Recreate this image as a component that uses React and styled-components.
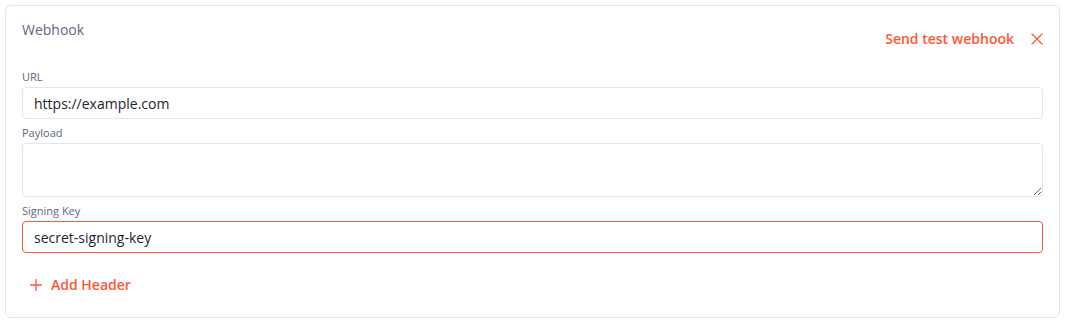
import React from 'react';
import styled, { createGlobalStyle } from 'styled-components';

const GlobalStyle = createGlobalStyle`
  body {
    margin: 0;
    background: #ffffff;
    font-family: "Open Sans", "Noto Sans", sans-serif;
  }
`;

const Page = styled.div`
  padding: 5px 7px 7px 5px;
`;

const Card = styled.section`
  border: 1px solid #e3e5ea;
  border-radius: 6px;
  padding: 16px 16px 24px 16px;
  display: flex;
  flex-direction: column;
`;

const Header = styled.div`
  display: flex;
  justify-content: space-between;
  align-items: flex-start;
  height: 48px;
`;

const Title = styled.h2`
  margin: 0;
  font-size: 14px;
  line-height: 16px;
  font-weight: 400;
  color: #5d6784;
`;

const Actions = styled.div`
  display: flex;
  align-items: center;
  gap: 17px;
  margin-top: 8px;
  margin-right: 0;
`;

const TextButton = styled.button`
  display: flex;
  align-items: center;
  gap: ${(p) => p.$gap || 0}px;
  padding: 0;
  border: none;
  background: none;
  font-family: inherit;
  font-size: 14px;
  line-height: 17px;
  font-weight: 600;
  color: #ff5733;
  cursor: pointer;
`;

const Field = styled.label`
  display: flex;
  flex-direction: column;
  gap: 3px;
  margin-bottom: 7px;
`;

const Label = styled.span`
  font-size: 11px;
  line-height: 14px;
  color: #5d6784;
`;

const Input = styled.input`
  box-sizing: border-box;
  height: 32px;
  width: 100%;
  padding: 0 11px;
  border: 1px solid ${(p) => (p.$active ? '#ff5733' : '#e2e6ee')};
  border-radius: 4px;
  font-family: inherit;
  font-size: 14px;
  color: #1f2330;
  outline: none;
`;

const TextArea = styled.textarea`
  box-sizing: border-box;
  height: 54px;
  width: 100%;
  padding: 8px 11px;
  border: 1px solid #e2e6ee;
  border-radius: 4px;
  font-family: inherit;
  font-size: 14px;
  outline: none;
  display: block;
`;

const Footer = styled.div`
  display: flex;
  padding: 16px 0 0 8px;
`;

const Icon = ({ d }) => (
  <svg width="12" height="12" viewBox="0 0 12 12" fill="none" stroke="currentColor" strokeWidth="1.3" strokeLinecap="round">
    <path d={d} />
  </svg>
);

export default function App() {
  return (
    <>
      <GlobalStyle />
      <Page>
        <Card>
          <Header>
            <Title>Webhook</Title>
            <Actions>
              <TextButton>Send test webhook</TextButton>
              <TextButton aria-label="Close">
                <Icon d="M1 1L11 11M11 1L1 11" />
              </TextButton>
            </Actions>
          </Header>
          <Field>
            <Label>URL</Label>
            <Input defaultValue="https://example.com" />
          </Field>
          <Field>
            <Label>Payload</Label>
            <TextArea />
          </Field>
          <Field>
            <Label>Signing Key</Label>
            <Input $active defaultValue="secret-signing-key" />
          </Field>
          <Footer>
            <TextButton $gap={9}>
              <Icon d="M6 0.5V11.5M0.5 6H11.5" />
              Add Header
            </TextButton>
          </Footer>
        </Card>
      </Page>
    </>
  );
}
